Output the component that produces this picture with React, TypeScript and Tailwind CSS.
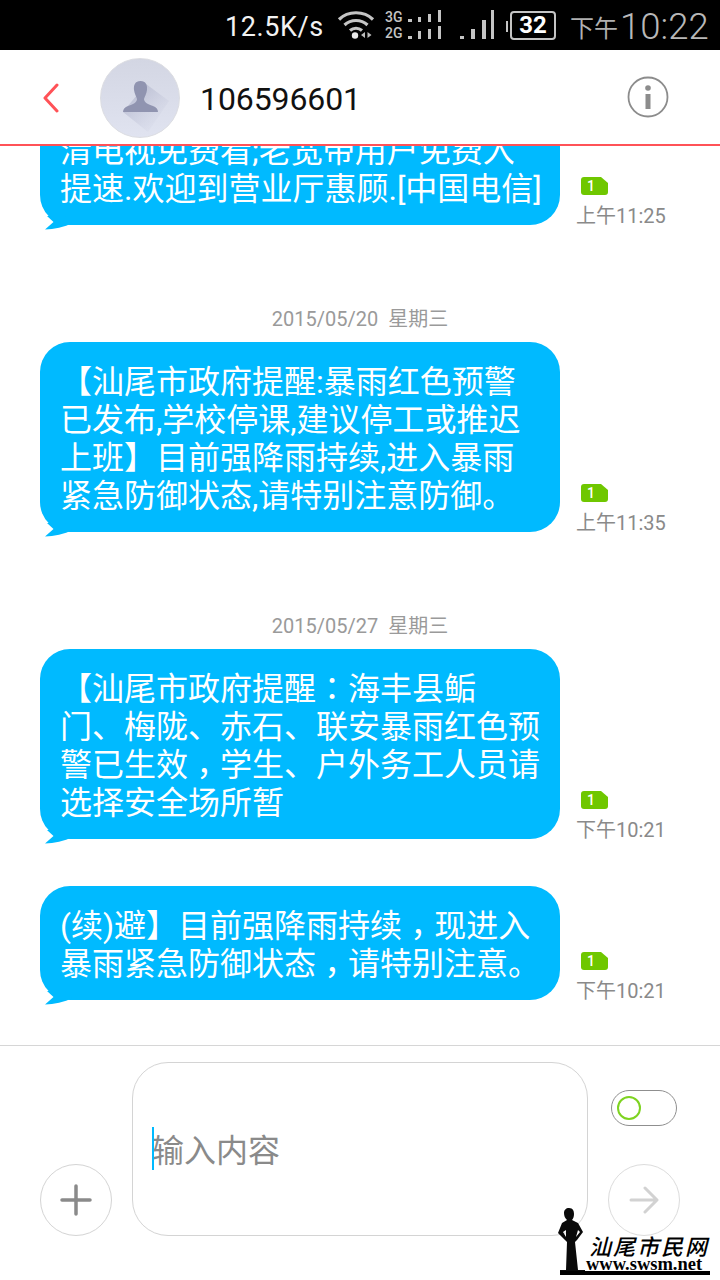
import React from "react";

function Wifi() {
  return (
    <svg width="38" height="32" viewBox="0 0 38 32" className="ml-[14px]">
      <g fill="none" stroke="#c4c4c4" strokeWidth="3.2">
        <path d="M2 10.5C11 1.5 27 1.5 36 10.5" />
        <path d="M7.5 16C14 10 24 10 30.5 16" />
        <path d="M13 21.5C16.5 18.5 21.500 18.500 25 21.500" />
      </g>
      <circle cx="18" cy="26.500" r="3.200" fill="#e8e8e8" />
      <path d="M28 23v6l-4-3zM30.500 23v6l4-3z" fill="#bdbdbd" />
    </svg>
  );
}

function NetBars() {
  return (
    <svg width="36" height="32" viewBox="0 0 36 32" className="ml-[5px]" fill="#c4c4c4">
      <rect x="0" y="10" width="4" height="3" />
      <rect x="10" y="8" width="3" height="5" />
      <rect x="20" y="5" width="3" height="8" />
      <rect x="30" y="1" width="3" height="12" />
      <rect x="0" y="27" width="4" height="3" />
      <rect x="10" y="22" width="3" height="8" />
      <rect x="20" y="20" width="3" height="10" />
      <rect x="30" y="17" width="3" height="13" />
    </svg>
  );
}

function Signal() {
  return (
    <svg width="36" height="32" viewBox="0 0 36 32" className="ml-[15px]" fill="#c4c4c4">
      <rect x="1" y="27" width="4" height="3" />
      <rect x="12" y="20" width="4" height="10" />
      <rect x="23" y="11" width="4" height="19" />
      <rect x="32" y="1" width="3" height="29" />
    </svg>
  );
}

function Tail() {
  return (
    <svg width="30" height="16" viewBox="0 0 30 16" className="absolute left-[4px] bottom-[-7px]">
      <path d="M3 0L9.500 6L1 13.500C10 13.500 20 11 29 7L20 0Z" fill="#00baff" />
    </svg>
  );
}

function Badge() {
  return (
    <div className="relative ml-[5px] h-[18px] w-[27px]">
      <svg width="27" height="18" viewBox="0 0 27 18" className="absolute inset-0">
        <path d="M3 0H20L27 6V15Q27 18 24 18H3Q0 18 0 15V3Q0 0 3 0Z" fill="#6fc700" />
      </svg>
      <span className="absolute left-[6px] top-0 text-[14px] leading-[18px] font-medium text-white">1</span>
    </div>
  );
}

// Fullwidth comma and colon sit centred in the cell in the reference's font.
function Line({ text }: { text: string }) {
  const parts = text.split(/([，：])/);
  return (
    <div className="h-[38px]">
      {parts.map((p, i) =>
        p === "，" ? (
          <span key={i} className="relative top-[9px] font-['Noto_Sans_CJK_TC',sans-serif] leading-none">
            {p}
          </span>
        ) : p === "：" ? (
          <span key={i} className="font-['Noto_Sans_CJK_TC',sans-serif] leading-none">
            {p}
          </span>
        ) : (
          <span key={i}>{p}</span>
        ),
      )}
    </div>
  );
}

function Message({ lines, time }: { lines: string[]; time: string }) {
  return (
    <div className="flex items-end">
      <div className="relative w-[520px] shrink-0 rounded-[30px] bg-[#00baff] px-[20px] pt-[21px] pb-[17px] text-[32px] leading-[38px] text-white whitespace-nowrap">
        {lines.map((l) => (
          <Line key={l} text={l} />
        ))}
        <Tail />
      </div>
      <div className="ml-[16px] -mb-[5px] flex flex-col">
        <Badge />
        <div className="mt-[7px] text-[20px] leading-[28px] text-[#8a8a8a]">{time}</div>
      </div>
    </div>
  );
}

function DateLabel({ text }: { text: string }) {
  return (
    <div className="mt-[80px] mb-[9px] pr-[40px] text-center text-[20px] leading-[28px] text-[#9a9a9a] whitespace-pre">
      {text}
    </div>
  );
}

export default function App() {
  return (
    <div className="relative flex h-[1280px] w-[720px] flex-col overflow-hidden bg-white font-[Roboto,'Noto_Sans_CJK_SC',sans-serif]">
      {/* status bar */}
      <div className="flex h-[50px] shrink-0 items-center bg-black pl-[225px]">
        <span className="mt-[4px] w-[98px] text-[27px] leading-[32px] tracking-[0.6px] text-[#f2f2f2] whitespace-nowrap">12.5K/s</span>
        <Wifi />
        <div className="ml-[10px] flex w-[18px] flex-col text-[14px] leading-[16px] font-medium text-[#c4c4c4]">
          <span>3G</span>
          <span>2G</span>
        </div>
        <NetBars />
        <Signal />
        <div className="relative ml-[15px] flex h-[29px] w-[46px] items-center justify-center rounded-[4px] border-2 border-[#c4c4c4]">
          <span className="absolute left-[-6px] top-[8px] h-[11px] w-[2px] bg-[#c4c4c4]" />
          <span className="text-[24px] leading-[25px] font-bold text-white">32</span>
        </div>
        <span className="ml-[14px] mt-[8px] text-[24px] leading-[30px] text-[#b0b0b0]">下午</span>
        <span className="ml-[2px] mt-[4px] text-[36.5px] leading-[40px] font-light text-[#b8b8b8]">10:22</span>
      </div>

      {/* header */}
      <div className="flex h-[96px] shrink-0 items-center border-b-2 border-[#ff5257] bg-white">
        <svg width="18" height="30" viewBox="0 0 18 30" className="ml-[42px] mt-[2px]">
          <path d="M15 2L3 15L15 28" fill="none" stroke="#ff5257" strokeWidth="3" strokeLinecap="round" strokeLinejoin="round" />
        </svg>
        <div className="ml-[40px] mt-[2px] h-[80px] w-[80px] overflow-hidden rounded-full border border-[#dcdde2] bg-[linear-gradient(180deg,#d3d6e3,#e0e3f0)]">
          <svg width="78" height="78" viewBox="0 0 78 78">
            <defs>
              <linearGradient id="avatarShade" x1="0.2" y1="0.2" x2="0.9" y2="0.9">
                <stop offset="0" stopColor="#a9adc6" stopOpacity="0.6" />
                <stop offset="1" stopColor="#c5c8dc" stopOpacity="0" />
              </linearGradient>
            </defs>
            <path d="M45 25L68 42L47 73L22 53Z" fill="url(#avatarShade)" />
            <path d="M39.500 22C34 22 32.500 26 33 31C33.500 35 35.500 38 36 40C36 43 33 45 27 47C24 48 22 50 22 53H57C57 50 55 48 52 47C46 45 43 43 43 40C43.500 38 45.500 35 46 31C46.500 26 45 22 39.500 22Z" fill="#9094b0" />
          </svg>
        </div>
        <span className="ml-[20px] mt-[4px] text-[32px] leading-[40px] tracking-[-0.1px] text-[#111]">106596601</span>
        <svg width="42" height="42" viewBox="0 0 42 42" className="ml-[266px]">
          <circle cx="21" cy="21" r="19.500" fill="none" stroke="#8c8c8c" strokeWidth="1.800" />
          <circle cx="21" cy="12" r="2.800" fill="#8c8c8c" />
          <rect x="18.500" y="18" width="5" height="15" fill="#8c8c8c" />
        </svg>
      </div>

      {/* message list */}
      <div className="flex min-h-0 flex-1 flex-col justify-end overflow-hidden pb-[45px] pl-[40px]">
        <Message lines={["清电视免费看;老宽带用户免费入", "提速.欢迎到营业厅惠顾.[中国电信]"]} time="上午11:25" />
        <DateLabel text="2015/05/20  星期三" />
        <Message
          lines={["【汕尾市政府提醒:暴雨红色预警", "已发布,学校停课,建议停工或推迟", "上班】目前强降雨持续,进入暴雨", "紧急防御状态,请特别注意防御。"]}
          time="上午11:35"
        />
        <DateLabel text="2015/05/27  星期三" />
        <Message
          lines={["【汕尾市政府提醒：海丰县鲘", "门、梅陇、赤石、联安暴雨红色预", "警已生效，学生、户外务工人员请", "选择安全场所暂"]}
          time="下午10:21"
        />
        <div className="h-[47px] shrink-0" />
        <Message lines={["(续)避】目前强降雨持续，现进入", "暴雨紧急防御状态，请特别注意。"]} time="下午10:21" />
      </div>

      {/* composer */}
      <div className="flex h-[235px] shrink-0 items-end border-t border-[#d6d6d6] bg-white pb-[44px] pl-[40px]">
        <div className="flex h-[72px] w-[72px] items-center justify-center rounded-full border border-[#d4d4d4]">
          <svg width="32" height="32" viewBox="0 0 32 32">
            <path d="M16 2V30M2 16H30" stroke="#8a8a8a" strokeWidth="3.500" strokeLinecap="round" />
          </svg>
        </div>
        <div className="relative ml-[20px] flex h-[174px] w-[456px] items-center rounded-[36px] border border-[#d4d4d4] pl-[19px]">
          <span className="mt-[3px] text-[32px] leading-[44px] text-[#8a8a8a]">输入内容</span>
          <span className="absolute left-[19px] top-[64px] h-[43px] w-[2px] bg-[#00baff]" />
        </div>
        <div className="ml-[20px] flex h-[146px] w-[72px] flex-col items-center justify-between">
          <div className="flex h-[36px] w-[66px] items-center rounded-full border border-[#8f8f8f] pl-[5px]">
            <span className="h-[24px] w-[24px] rounded-full border-2 border-[#7ed321]" />
          </div>
          <div className="flex h-[72px] w-[72px] items-center justify-center rounded-full border border-[#dcdcdc]">
            <svg width="30" height="30" viewBox="0 0 30 30">
              <path d="M2 15H27M16 3L28 15L16 27" fill="none" stroke="#d2d2d2" strokeWidth="3" strokeLinecap="round" strokeLinejoin="round" />
            </svg>
          </div>
        </div>
      </div>

      {/* watermark */}
      <div className="absolute left-[558px] top-[1208px] h-[68px] w-[154px]">
        <svg width="28" height="67" viewBox="0 0 28 67" className="absolute left-0 top-0">
          <path
            fillRule="evenodd"
            d="M11 0C15 0 16 3 16 6C16 9 15 11 14 12L20 15L25 24L19 32L17 34L20 62H27V67H2V62H8L9 34L7 32L0 25L4 15L9 12C7 10 6 8 6 5C6 2 8 0 11 0ZM5 24L8 29L8 22ZM20 22L22 24L18 29Z"
            fill="#0a0a0a"
          />
        </svg>
        <div className="absolute left-[31px] top-[30px] text-[22px] leading-[20px] font-medium italic tracking-[2px] text-black whitespace-nowrap">
          汕尾市民网
        </div>
        <div className="absolute left-[28px] top-[50px] font-['Liberation_Serif',serif] text-[18.500px] leading-[13px] font-bold text-black whitespace-nowrap">
          www.swsm.net
        </div>
        <div className="absolute bottom-[1px] left-[2px] h-[4px] w-[150px] bg-black" />
      </div>
    </div>
  );
}
